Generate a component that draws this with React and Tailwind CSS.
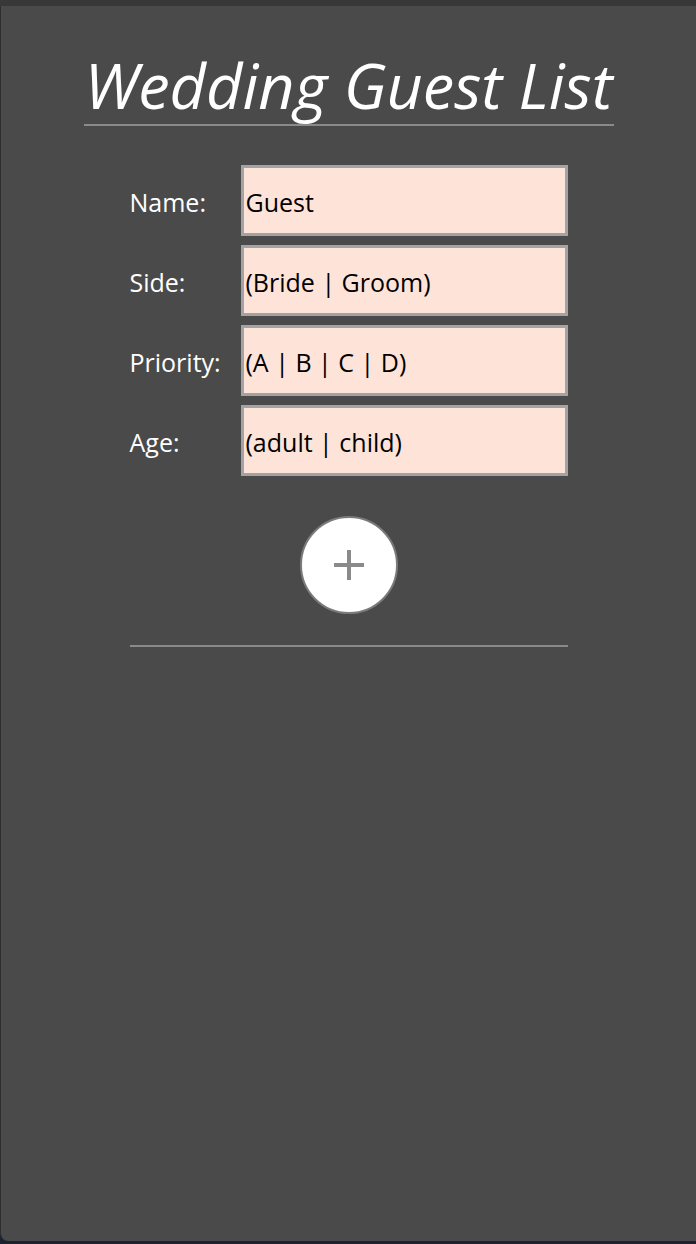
import React from 'react';

const fields = [
    { label: 'Name:', value: 'Guest' },
    { label: 'Side:', value: '(Bride | Groom)' },
    { label: 'Priority:', value: '(A | B | C | D)' },
    { label: 'Age:', value: '(adult | child)' },
];

export default function App() {
    return (
        <div className="w-[696px] h-[1244px] bg-[#1c2230] flex flex-col font-['Open_Sans',sans-serif]">
            <div className="h-[6px] bg-[#383838]" />
            {/* window body */}
            <div className="flex-1 mb-[3px] bg-[#4a4a4a] border-l border-[#2e2e2e] rounded-bl-[8px] flex flex-col items-center">
                <h1 className="mt-[44px] w-[530px] text-center italic font-normal text-[63px] leading-[70px] text-white border-b-2 border-[#8a8a8a] pb-[4px] whitespace-nowrap">
                    Wedding Guest List
                </h1>

                <div className="mt-[39px] flex flex-col gap-[9px]">
                    {fields.map((f) => (
                        <div key={f.label} className="flex items-center">
                            <span className="w-[111px] text-[25px] text-white pt-[4px]">{f.label}</span>
                            <div className="w-[327px] h-[71px] bg-[#fde3d8] border-[3px] border-[#a3a3a3] flex items-center px-[2px] pt-[4px] text-[25px] text-black">
                                {f.value}
                            </div>
                        </div>
                    ))}
                </div>

                <button className="mt-[40px] w-[98px] h-[98px] rounded-full bg-white border-2 border-[#7a7a7a] flex items-center justify-center">
                    <svg width="30" height="30" viewBox="0 0 30 30">
                        <path d="M15 0v30M0 15h30" stroke="#8a8a8a" strokeWidth="4" />
                    </svg>
                </button>

                <div className="mt-[31px] w-[438px] h-[2px] bg-[#8a8a8a]" />
            </div>
        </div>
    );
}
